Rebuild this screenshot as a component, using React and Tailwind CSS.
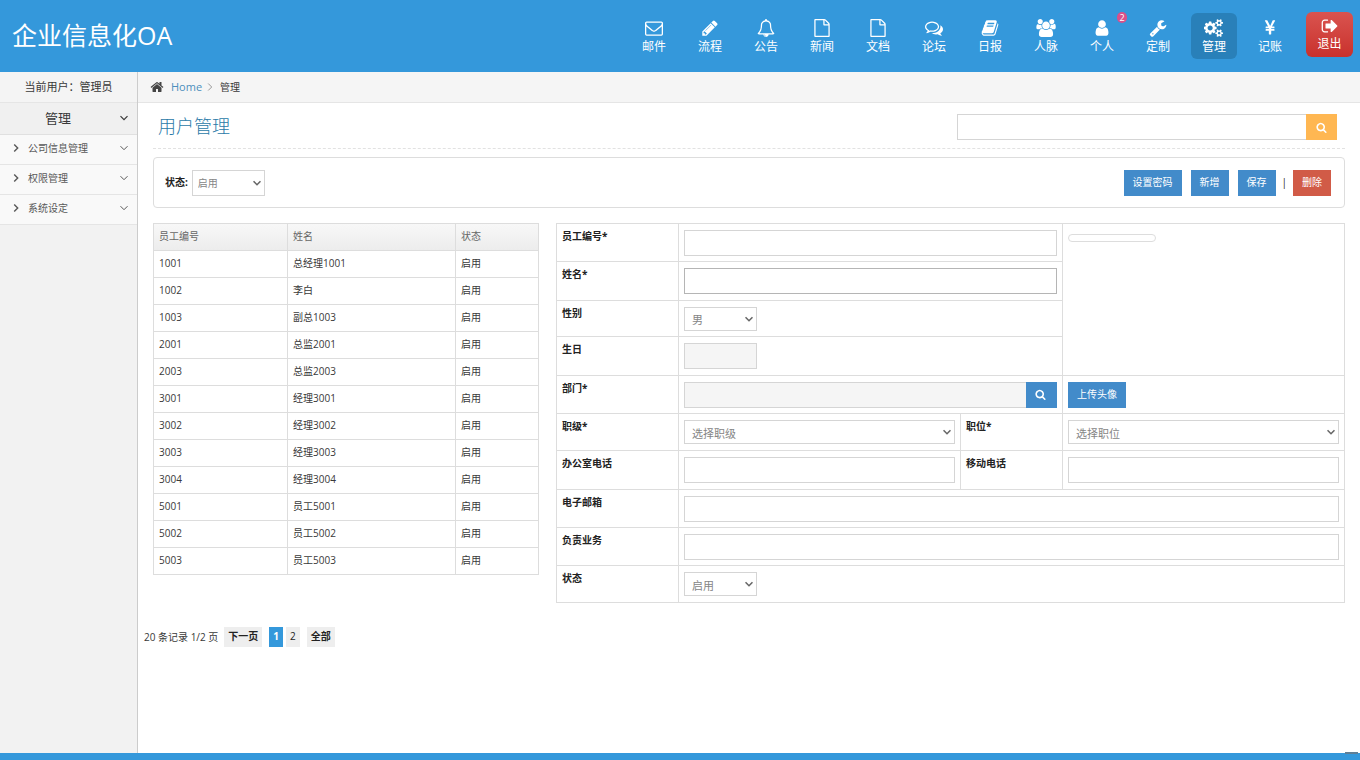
import React from "react";

const ICONS = {
  mail: ["0 0 1792 1792", "M1664 1504v-768q-32 36-69 66-268 206-426 338-51 43-83 67t-86.5 48.5-102.5 24.5h-2q-48 0-102.5-24.5t-86.5-48.5-83-67q-158-132-426-338-37-30-69-66v768q0 13 9.5 22.5t22.5 9.5h1472q13 0 22.5-9.5t9.5-22.5zm0-1051v-24.5l-.5-13-3-12.5-5.5-9-9-7.5-14-2.5h-1472q-13 0-22.5 9.5t-9.5 22.5q0 168 147 284 193 152 401 317 6 5 35 29.5t46 37.5 44.5 31.5 50.5 27.5 43 9h2q20 0 43-9t50.5-27.5 44.5-31.5 46-37.5 35-29.5q208-165 401-317 54-43 100.5-115.5t46.5-131.5zm128-37v1088q0 66-47 113t-113 47h-1472q-66 0-113-47t-47-113v-1088q0-66 47-113t113-47h1472q66 0 113 47t47 113z"],
  pencil: ["0 0 1792 1792", "M491 1536l91-91-235-235-91 91v107h128v128h107zm523-928q0-22-22-22-10 0-17 7l-542 542q-7 7-7 17 0 22 22 22 10 0 17-7l542-542q7-7 7-17zm-54-192l416 416-832 832h-416v-416zm683 96q0 53-37 90l-166 166-416-416 166-165q36-38 90-38 53 0 91 38l235 234q37 39 37 91z"],
  bell: ["0 0 1792 1792", "M912 1696q0-16-16-16-59 0-101.5-42.5t-42.5-101.5q0-16-16-16t-16 16q0 73 51.5 124.5t124.5 51.5q16 0 16-16zm-666-288h1300q-266-300-266-832 0-51-24-105t-69-103-121.5-80.5-169.5-31.5-169.5 31.5-121.5 80.5-69 103-24 105q0 532-266 832zm1482 0q0 52-38 90t-90 38h-448q0 106-75 181t-181 75-181-75-75-181h-448q-52 0-90-38t-38-90q50-42 91-88t85-119.5 74.5-158.5 50-206 19.5-260q0-152 117-282.5t307-158.5q-8-19-8-39 0-40 28-68t68-28 68 28 28 68q0 20-8 39 190 28 307 158.5t117 282.5q0 139 19.5 260t50 206 74.5 158.5 85 119.5 91 88z"],
  file: ["0 0 1792 1792", "M1596 380q28 28 48 76t20 88v1152q0 40-28 68t-68 28h-1344q-40 0-68-28t-28-68v-1600q0-40 28-68t68-28h896q40 0 88 20t76 48zm-444-244v376h376q-10-29-22-41l-313-313q-12-12-41-22zm384 1528v-1024h-416q-40 0-68-28t-28-68v-416h-768v1536h1280z"],
  comments: ["0 0 1792 1792", "M704 384q-153 0-286 52t-211.5 141-78.5 191q0 82 53 158t149 132l97 56-35 84q34-20 62-39l44-31 53 10q78 14 153 14 153 0 286-52t211.5-141 78.5-191-78.5-191-211.5-141-286-52zm0-128q191 0 353.5 68.5t256.5 186.5 94 257-94 257-256.5 186.5-353.5 68.5q-86 0-176-16-124 88-278 128-36 9-86 16h-3q-11 0-20.5-8t-11.5-21q-1-3-1-6.5t.5-6.5 2-6l2.5-5 3.5-5.5 4-5 4.5-5 4-4.5q5-6 23-25t26-29.5 22.5-29 25-38.5 20.5-44q-124-72-195-177t-71-224q0-139 94-257t256.5-186.5 353.5-68.5zm822 1169q10 24 20.5 44t25 38.5 22.5 29 26 29.5 23 25q1 1 4 4.5t4.5 5 4 5 3.5 5.5l2.5 5 2 6 .5 6.5-1 6.5q-3 14-13 22t-22 7q-50-7-86-16-154-40-278-128-90 16-176 16-271 0-472-132 58 4 88 4 161 0 309-45t264-129q125-92 192-212t67-254q0-77-23-152 129 71 204 178t75 230q0 120-71 224.5t-195 176.5z"],
  book: ["0 0 1792 1792", "M1703 478q40 57 18 129l-275 906q-19 64-76.5 107.5t-122.5 43.5h-923q-77 0-148.5-53.5t-99.5-131.5q-24-67-2-127 0-4 3-27t4-37q1-8-3-21.5t-3-19.5q2-11 8-21t16.5-23.5 16.5-23.5q23-38 45-91.5t30-91.5q3-10 .5-30t-.5-28q3-11 17-28t17-23q21-36 42-92t25-90q1-9-2.5-32t.5-28q4-13 22-30.5t22-22.5q19-26 42.5-84.5t27.5-96.5q1-8-3-25.5t-2-26.5q2-8 9-18t18-23 17-21q8-12 16.5-30.5t15-35 16-36 19.5-32 26.5-23.5 36-11.5 47.5 5.5l-1 3q38-9 51-9h761q74 0 114 56t18 130l-274 906q-36 119-71.5 153.5t-128.5 34.5h-869q-27 0-38 15-11 16-1 43 24 70 144 70h923q29 0 56-15.5t35-41.5l300-987q7-22 5-57 38 15 59 43zm-1064 2q-4 13 2 22.5t20 9.5h608q13 0 25.5-9.5t16.5-22.5l21-64q4-13-2-22.5t-20-9.5h-608q-13 0-25.5 9.5t-16.5 22.5zm-83 256q-4 13 2 22.5t20 9.5h608q13 0 25.5-9.5t16.5-22.5l21-64q4-13-2-22.5t-20-9.5h-608q-13 0-25.5 9.5t-16.5 22.5z"],
  users: ["0 0 1920 1792", "M593 896q-162 5-265 128h-134q-82 0-138-40.5t-56-118.5q0-353 124-353 6 0 43.5 21t97.5 42.5 119 21.5q67 0 133-23-5 37-5 66 0 159 93 293zm1071 637q0 120-73 189.5t-194 69.5h-874q-121 0-194-69.5t-73-189.5q0-53 3.5-103.5t14-109 26.5-108.5 43-97.5 62-81 85.5-53.5 111.5-20q10 0 43 21.5t73 48 107 48 135 21.5 135-21.5 107-48 73-48 43-21.5q61 0 111.5 20t85.5 53.5 62 81 43 97.5 26.5 108.5 14 109 3.5 103.5zm-1024-1277q0 106-75 181t-181 75-181-75-75-181 75-181 181-75 181 75 75 181zm704 384q0 159-112.5 271.5t-271.5 112.5-271.5-112.5-112.5-271.5 112.5-271.5 271.5-112.5 271.5 112.5 112.5 271.5zm576 225q0 78-56 118.5t-138 40.5h-134q-103-123-265-128 93-134 93-293 0-29-5-66 66 23 133 23 59 0 119-21.5t97.5-42.5 43.5-21q124 0 124 353zm-128-609q0 106-75 181t-181 75-181-75-75-181 75-181 181-75 181 75 75 181z"],
  user: ["0 0 1792 1792", "M1536 1399q0 109-62.5 187t-150.5 78h-854q-88 0-150.5-78t-62.5-187q0-85 8.5-160.5t31.5-152 58.5-131 94-89 134.5-34.5q131 128 313 128t313-128q76 0 134.5 34.5t94 89 58.5 131 31.5 152 8.5 160.5zm-256-887q0 159-112.5 271.5t-271.5 112.5-271.5-112.5-112.5-271.5 112.5-271.5 271.5-112.5 271.5 112.5 112.5 271.5z"],
  wrench: ["0 0 1792 1792", "M448 1472q0-26-19-45t-45-19-45 19-19 45 19 45 45 19 45-19 19-45zm644-420l-682 682q-37 37-90 37-52 0-91-37l-106-108q-38-36-38-90 0-53 38-91l681-681q39 98 114.5 173.5t173.5 114.5zm634-435q0 39-23 106-47 134-164.5 217.5t-258.5 83.5q-185 0-316.5-131.5t-131.5-316.5 131.5-316.5 316.5-131.5q58 0 121.5 16.5t107.5 46.5q16 11 16 28t-16 28l-293 169v224l193 107q5-3 79-48.5t135.5-81 70.5-35.5q15 0 23.5 10t8.5 25z"],
  cogs: ["0 0 1920 1792", "M832 896q0-106-75-181t-181-75-181 75-75 181 75 181 181 75 181-75 75-181zm768 512q0-52-38-90t-90-38-90 38-38 90q0 53 37.5 90.5t90.5 37.5 90.5-37.5 37.5-90.5zm0-1024q0-52-38-90t-90-38-90 38-38 90q0 53 37.5 90.5t90.5 37.5 90.5-37.5 37.5-90.5zm-384 421v185q0 10-7 19.5t-16 10.5l-155 24q-11 35-32 76 34 48 90 115 7 11 7 20 0 12-7 19-23 30-82.5 89.5t-78.5 59.5q-11 0-21-7l-115-90q-37 19-77 31-11 108-23 155-7 24-30 24h-186q-11 0-20-7.5t-10-17.5l-23-153q-34-10-75-31l-118 89q-7 7-20 7-11 0-21-8-144-133-144-160 0-9 7-19 10-14 41-53t47-61q-23-44-35-82l-152-24q-10-1-17-9.5t-7-19.5v-185q0-10 7-19.5t16-10.5l155-24q11-35 32-76-34-48-90-115-7-11-7-20 0-12 7-20 22-30 82-89t79-59q11 0 21 7l115 90q34-18 77-32 11-108 23-154 7-24 30-24h186q11 0 20 7.5t10 17.5l23 153q34 10 75 31l118-89q8-7 20-7 11 0 21 8 144 133 144 160 0 8-7 19-12 16-42 54t-45 60q23 48 34 82l152 23q10 2 17 10.5t7 19.5zm640 533v140q0 16-149 31-12 27-30 52 51 113 51 138 0 4-4 7-122 71-124 71-8 0-46-47t-52-68q-20 2-30 2t-30-2q-14 21-52 68t-46 47q-2 0-124-71-4-3-4-7 0-25 51-138-18-25-30-52-149-15-149-31v-140q0-16 149-31 13-29 30-52-51-113-51-138 0-4 4-7 4-2 35-20t59-34 30-16q8 0 46 46.5t52 67.5q20-2 30-2t30 2q51-71 92-112l6-2q4 0 124 70 4 3 4 7 0 25-51 138 17 23 30 52 149 15 149 31zm0-1024v140q0 16-149 31-12 27-30 52 51 113 51 138 0 4-4 7-122 71-124 71-8 0-46-47t-52-68q-20 2-30 2t-30-2q-14 21-52 68t-46 47q-2 0-124-71-4-3-4-7 0-25 51-138-18-25-30-52-149-15-149-31v-140q0-16 149-31 13-29 30-52-51-113-51-138 0-4 4-7 4-2 35-20t59-34 30-16q8 0 46 46.5t52 67.5q20-2 30-2t30 2q51-71 92-112l6-2q4 0 124 70 4 3 4 7 0 25-51 138 17 23 30 52 149 15 149 31z"],
  yen: ["0 0 1792 1792", "M985.5 1536h-172q-13 0-22.5-9t-9.5-23v-330h-288q-13 0-22.5-9t-9.5-23v-103q0-13 9.5-22.5t22.5-9.5h288v-85h-288q-13 0-22.5-9t-9.5-23v-104q0-13 9.5-22.5t22.5-9.5h214l-321-578q-8-16 0-32 10-16 28-16h194q19 0 29 18l215 425q19 38 56 125 10-24 30.5-68t27.5-61l191-420q8-19 29-19h191q17 0 27 16 9 14 1 31l-313 579h215q13 0 22.5 9.5t9.5 22.5v104q0 14-9.5 23t-22.5 9h-290v85h290q13 0 22.5 9.5t9.5 22.5v103q0 14-9.5 23t-22.5 9h-290v330q0 13-9.5 22.5t-22.5 9.5z"],
  exit: ["0 0 1792 1792", "M704 1440q0 4 1 20t.5 26.5-3 23.5-10 19.5-20.5 6.5h-320q-119 0-203.5-84.5t-84.5-203.5v-704q0-119 84.5-203.5t203.5-84.5h320q13 0 22.5 9.5t9.5 22.5q0 4 1 20t.5 26.5-3 23.5-10 19.5-20.5 6.5h-320q-66 0-113 47t-47 113v704q0 66 47 113t113 47h312l11.5 1 11.5 3 8 5.5 7 9 2 13.5zm928-544q0 26-19 45l-544 544q-19 19-45 19t-45-19-19-45v-288h-448q-26 0-45-19t-19-45v-384q0-26 19-45t45-19h448v-288q0-26 19-45t45-19 45 19l544 544q19 19 19 45z"],
  home: ["0 0 1792 1792", "M1472 992v480q0 26-19 45t-45 19h-384v-384h-256v384h-384q-26 0-45-19t-19-45v-480q0-1 .5-3t.5-3l575-474 575 474q1 2 1 6zm223-69l-62 74q-8 9-21 11h-3q-13 0-21-7l-692-577-692 577q-12 8-24 7-13-2-21-11l-62-74q-8-10-7-23.5t11-21.5l719-599q32-26 76-26t76 26l244 204v-195q0-14 9-23t23-9h192q14 0 23 9t9 23v408l219 182q10 8 11 21.5t-7 23.5z"],
  search: ["0 0 1792 1792", "M1216 832q0-185-131.5-316.5t-316.5-131.5-316.5 131.5-131.5 316.5 131.5 316.5 316.5 131.5 316.5-131.5 131.5-316.5zm512 832q0 52-38 90t-90 38q-54 0-90-38l-343-342q-179 124-399 124-143 0-273.5-55.5t-225-150-150-225-55.5-273.5 55.5-273.5 150-225 225-150 273.5-55.5 273.5 55.5 225 150 150 225 55.5 273.5q0 220-124 399l343 343q37 37 37 90z"],
};

function Icon({ name, className }) {
  const [viewBox, d] = ICONS[name];
  return (
    <svg viewBox={viewBox} className={className} fill="currentColor" aria-hidden="true">
      <path d={d} />
    </svg>
  );
}

function Chevron({ className }) {
  return (
    <svg viewBox="0 0 8 8" className={className} fill="none" stroke="currentColor" aria-hidden="true">
      <path d="M0.5 2.2 4 5.7 7.5 2.2" />
    </svg>
  );
}

const NAV = [
  ["mail", "邮件"],
  ["pencil", "流程"],
  ["bell", "公告"],
  ["file", "新闻"],
  ["file", "文档"],
  ["comments", "论坛"],
  ["book", "日报"],
  ["users", "人脉"],
  ["user", "个人", "2"],
  ["wrench", "定制"],
  ["cogs", "管理"],
  ["yen", "记账"],
];

const MENU = ["公司信息管理", "权限管理", "系统设定"];

const STAFF = [
  ["1001", "总经理1001"],
  ["1002", "李白"],
  ["1003", "副总1003"],
  ["2001", "总监2001"],
  ["2003", "总监2003"],
  ["3001", "经理3001"],
  ["3002", "经理3002"],
  ["3003", "经理3003"],
  ["3004", "经理3004"],
  ["5001", "员工5001"],
  ["5002", "员工5002"],
  ["5003", "员工5003"],
];

const cell = "border border-[#ddd]";
const field = "block w-full h-[26px] border border-[#d5d5d5] bg-white px-2 outline-none";
const blueButton = "flex h-[26px] items-center justify-center bg-[#428bca] px-[9px] pb-[2px] text-white";
const formSelect = "h-6 pt-[3px] pl-[7px] text-[11px]";

function Select({ id, options, className, selectClass }) {
  return (
    <div className={`relative ${className}`}>
      <select
        id={id}
        className={`block w-full appearance-none border border-[#d5d5d5] bg-white text-[#858585] outline-none ${selectClass}`}
      >
        {options.map((o) => (
          <option key={o}>{o}</option>
        ))}
      </select>
      <Chevron className="pointer-events-none absolute top-1/2 right-1 size-2 -translate-y-1/2 stroke-[1.6] text-[#666]" />
    </div>
  );
}

function Label({ htmlFor, children }) {
  return (
    <th scope="row" className={`${cell} px-[5px] pt-1 text-left align-top font-bold text-[#222]`}>
      <label htmlFor={htmlFor}>{children}</label>
    </th>
  );
}

function Field({ span, children }) {
  return (
    <td colSpan={span} className={`${cell} px-[5px] py-[5px]`}>
      {children}
    </td>
  );
}

export default function App() {
  return (
    <div className="flex min-h-screen flex-col bg-white font-['Open_Sans','Noto_Sans_CJK_SC',sans-serif] text-[10px] leading-4 text-[#393939]">
      <header className="flex h-[72px] items-start bg-[#3498db] text-white">
        <h1 className="pl-3 pt-[17px] text-[25px] leading-9 font-normal">企业信息化OA</h1>
        <nav className="ml-auto flex gap-[10px] pt-[13px]">
          {NAV.map(([icon, label, badge]) => (
            <a
              key={label}
              href="#"
              className={`relative flex h-[46px] w-[46px] flex-col items-center rounded-md pt-[6px] text-[12px] ${label === "管理" ? "bg-[#2980b9]" : ""}`}
            >
              <Icon name={icon} className="h-[18px] w-5 shrink-0" />
              <span className="leading-5">{label}</span>
              {badge && (
                <span className="absolute -top-px -right-[2px] flex h-[11px] w-[10px] items-center justify-center rounded-full bg-[#d9508a] text-[9px] leading-none">
                  {badge}
                </span>
              )}
            </a>
          ))}
        </nav>
        <a
          href="#"
          className="mt-3 mr-[7px] ml-[13px] flex h-[45px] w-[47px] flex-col items-center rounded-md bg-linear-to-b from-[#d9534f] to-[#c9302c] pt-[5px] text-[12px]"
        >
          <Icon name="exit" className="h-[18px] w-[18px] shrink-0" />
          <span className="leading-[18px]">退出</span>
        </a>
      </header>

      <div className="flex flex-1">
        <aside className="w-[138px] shrink-0 border-r border-[#ccc] bg-[#f2f2f2]">
          <p className="flex h-[31px] items-center justify-center border-b border-[#e5e5e5] bg-[#f4f4f4] text-[11px]">当前用户：管理员</p>
          <button type="button" className="flex h-8 w-full items-center border-b border-[#e0e0e0] bg-[#f0f0f0] pr-[9px] pb-[2px] pl-[45px] text-[13px]">
            管理
            <Chevron className="ml-auto size-2 stroke-[1.2]" />
          </button>
          <ul className="text-[#585858]">
            {MENU.map((item) => (
              <li key={item}>
                <a href="#" className="flex h-[30px] items-center border-b border-[#e5e5e5] bg-[#f9f9f9] pr-[9px] pb-[3px] pl-3">
                  <Chevron className="mr-2 size-2 -rotate-90 stroke-[1.4]" />
                  {item}
                  <Chevron className="ml-auto size-2 stroke-[1]" />
                </a>
              </li>
            ))}
          </ul>
        </aside>

        <main className="min-w-0 flex-1">
          <div className="flex h-[31px] items-center border-b border-[#e5e5e5] bg-[#f5f5f5] pl-3">
            <Icon name="home" className="size-[14px] text-[#444]" />
            <a href="#" className="ml-[7px] text-[11px] text-[#4c8fbd]">Home</a>
            <Chevron className="mx-1 size-2 -rotate-90 stroke-[1] text-[#999]" />
            <span className="ml-[2px]">管理</span>
          </div>

          <div className="mr-[15px] ml-[15px]">
            <div className="flex h-[46px] items-center justify-between border-b border-dashed border-[#e2e2e2] pr-2 pl-[5px]">
              <h2 className="text-[18px] leading-6 font-light text-[#2a7aa8]">用户管理</h2>
              <form className="mt-[3px] flex w-[380px]" onSubmit={(e) => e.preventDefault()}>
                <input aria-label="搜索" className="h-[26px] min-w-0 flex-1 border border-r-0 border-[#d5d5d5] px-2 outline-none" />
                <button type="submit" aria-label="搜索" className="flex h-[26px] w-[31px] items-center justify-center bg-[#ffb752] text-white">
                  <Icon name="search" className="size-[11px]" />
                </button>
              </form>
            </div>

            <div className="mt-2 flex h-[51px] items-center rounded-sm border border-[#ddd] pr-[13px] pl-[11px]">
              <label htmlFor="filter" className="mr-1 pb-[2px] font-bold text-[#222]">状态:</label>
              <Select id="filter" options={["启用", "停用"]} className="w-[73px]" selectClass="h-[26px] pl-[5px]" />
              <div className="ml-auto flex items-center">
                <button type="button" className={blueButton + " mr-[9px]"}>设置密码</button>
                <button type="button" className={blueButton + " mr-[9px]"}>新增</button>
                <button type="button" className={blueButton}>保存</button>
                <span className="mx-[6px] pb-[2px] text-[#222]">|</span>
                <button type="button" className="flex h-[26px] items-center justify-center bg-[#d15b47] px-[9px] pb-[2px] text-white">删除</button>
              </div>
            </div>

            <div className="mt-[15px] grid grid-cols-[386fr_789fr] items-start gap-[17px]">
              <table className="w-full table-fixed border-collapse">
                <colgroup>
                  <col className="w-[134px]" />
                  <col className="w-[168px]" />
                  <col />
                </colgroup>
                <thead>
                  <tr className="h-[27px] bg-linear-to-b from-[#f8f8f8] to-[#ececec] text-left text-[#666]">
                    {["员工编号", "姓名", "状态"].map((h) => (
                      <th key={h} scope="col" className={`${cell} px-[5px] pb-[2px] font-normal`}>{h}</th>
                    ))}
                  </tr>
                </thead>
                <tbody>
                  {STAFF.map(([no, name]) => (
                    <tr key={no} className="h-[27px]">
                      <td className={`${cell} px-[5px] pb-[2px]`}>{no}</td>
                      <td className={`${cell} px-[5px] pb-[2px]`}>{name}</td>
                      <td className={`${cell} px-[5px] pb-[2px]`}>启用</td>
                    </tr>
                  ))}
                </tbody>
              </table>

              <table className="w-full table-fixed border-collapse">
                <colgroup>
                  <col className="w-[122px]" />
                  <col />
                  <col className="w-[102px]" />
                  <col />
                </colgroup>
                <tbody>
                  <tr className="h-[38px]">
                    <Label htmlFor="no">员工编号*</Label>
                    <Field span={2}><input id="no" className={field} /></Field>
                    <td rowSpan={4} className={`${cell} px-[5px] pt-[10px] align-top`}>
                      <div className="h-2 w-[88px] rounded-sm border border-[#ddd]" />
                    </td>
                  </tr>
                  <tr className="h-[39px]">
                    <Label htmlFor="name">姓名*</Label>
                    <Field span={2}>
                      <input id="name" className="block h-[26px] w-full border border-[#b5b5b5] bg-white px-2 outline-none" />
                    </Field>
                  </tr>
                  <tr className="h-9">
                    <Label htmlFor="sex">性别</Label>
                    <Field span={2}><Select id="sex" options={["男", "女"]} className="w-[73px]" selectClass={formSelect} /></Field>
                  </tr>
                  <tr className="h-[39px]">
                    <Label htmlFor="birthday">生日</Label>
                    <Field span={2}>
                      <input id="birthday" readOnly className="block h-[26px] w-[73px] border border-[#d5d5d5] bg-[#f5f5f5] px-2 outline-none" />
                    </Field>
                  </tr>
                  <tr className="h-[38px]">
                    <Label htmlFor="dept">部门*</Label>
                    <Field span={2}>
                      <div className="flex">
                        <input id="dept" readOnly className="h-[26px] min-w-0 flex-1 border border-r-0 border-[#d5d5d5] bg-[#f5f5f5] px-2 outline-none" />
                        <button type="button" aria-label="选择部门" className="flex h-[26px] w-[31px] items-center justify-center bg-[#428bca] pr-[2px] text-white">
                          <Icon name="search" className="size-[11px]" />
                        </button>
                      </div>
                    </Field>
                    <Field><button type="button" className={blueButton}>上传头像</button></Field>
                  </tr>
                  <tr className="h-[37px]">
                    <Label htmlFor="rank">职级*</Label>
                    <Field><Select id="rank" options={["选择职级"]} className="w-full" selectClass={formSelect} /></Field>
                    <Label htmlFor="post">职位*</Label>
                    <Field><Select id="post" options={["选择职位"]} className="w-full" selectClass={formSelect} /></Field>
                  </tr>
                  <tr className="h-[39px]">
                    <Label htmlFor="tel">办公室电话</Label>
                    <Field><input id="tel" className={field} /></Field>
                    <Label htmlFor="mobile">移动电话</Label>
                    <Field><input id="mobile" className={field} /></Field>
                  </tr>
                  <tr className="h-[38px]">
                    <Label htmlFor="email">电子邮箱</Label>
                    <Field span={3}><input id="email" className={field} /></Field>
                  </tr>
                  <tr className="h-[38px]">
                    <Label htmlFor="duty">负责业务</Label>
                    <Field span={3}><input id="duty" className={field} /></Field>
                  </tr>
                  <tr className="h-[37px]">
                    <Label htmlFor="state">状态</Label>
                    <Field span={3}><Select id="state" options={["启用", "停用"]} className="w-[73px]" selectClass={formSelect} /></Field>
                  </tr>
                </tbody>
              </table>
            </div>
          </div>

          <div className="mt-6 flex h-5 items-center pl-[6px]">
            <span>20 条记录 1/2 页</span>
            <a href="#" className="ml-[6px] bg-[#eee] px-1 pt-px pb-[3px] font-bold text-[#222]">下一页</a>
            <span className="ml-[7px] bg-[#3498db] px-1 pt-px pb-[3px] font-bold text-white">1</span>
            <a href="#" className="ml-[3px] bg-[#eee] px-1 pt-px pb-[3px] text-[#222]">2</a>
            <a href="#" className="ml-[7px] bg-[#eee] px-1 pt-px pb-[3px] font-bold text-[#222]">全部</a>
          </div>
        </main>
      </div>

      <footer className="relative h-[7px] bg-[#3498db]">
        <button type="button" aria-label="返回顶部" className="absolute -top-px right-[2px] block h-[2px] w-[13px] bg-[#5f7f96]" />
      </footer>
    </div>
  );
}
